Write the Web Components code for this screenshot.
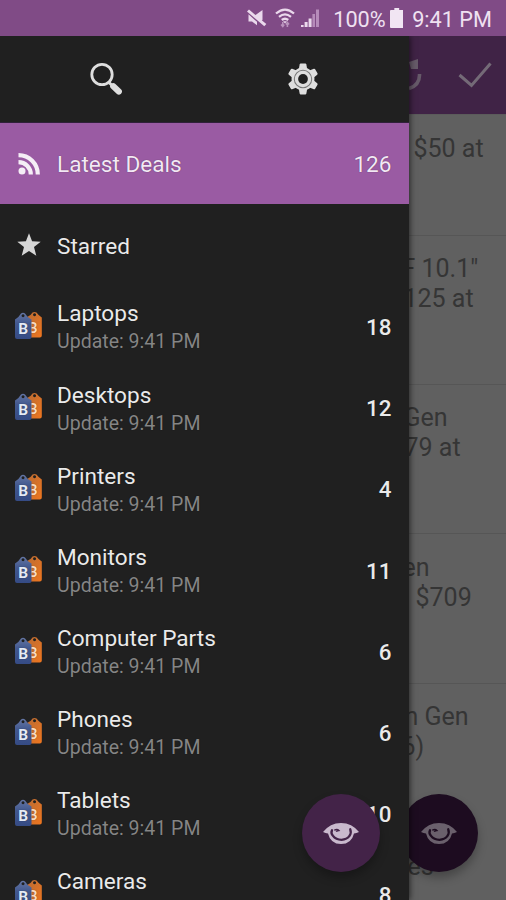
<!DOCTYPE html>
<html lang="en">
<head>
<meta charset="utf-8">
<title>Deals</title>
<style>
html,body{margin:0;height:100%;overflow:hidden;background:#202020;font-family:Roboto,"Liberation Sans",sans-serif}
</style>
</head>
<body>
<deals-app></deals-app>
<script>
const define = (name, html, setup) => customElements.define(name, class extends HTMLElement {
  constructor() {
    super();
    const t = document.createElement('template');
    t.innerHTML = html;
    this.attachShadow({ mode: 'open' }).append(t.content.cloneNode(true));
  }
  connectedCallback() { if (setup) setup(this, this.shadowRoot); }
});

const tooth = 'M11.6 6.5L12.4 1.6q.2-1 1.1-1h5q.9 0 1.1 1L20.4 6.5z';
const glyphs = {
  search: ['0 0 36 36', '<circle cx="14" cy="13.5" r="10.2" fill="none" stroke="#dedede" stroke-width="2.8"/><path d="M21 21.5l3.2 3" stroke="#dedede" stroke-width="3"/><path d="M25.3 25.3l5.5 5.2" stroke="#dedede" stroke-width="6.2" stroke-linecap="round"/>'],
  gear: ['0 0 32 34', `<g fill="#dedede"><circle cx="16" cy="17" r="12.2"/>${[0,60,120,180,240,300].map(a => `<path transform="rotate(${a} 16 17)" d="${tooth}"/>`).join('')}</g><circle cx="16" cy="17" r="9.3" fill="none" stroke="#777" stroke-width="1.1"/><circle cx="16" cy="17" r="5.2" fill="#202020"/>`],
  rss: ['0 0 24 24', '<circle cx="5" cy="19" r="3.5" fill="#f5eef6"/><path d="M1.5 10.2A12.3 12.3 0 0 1 13.8 22.5M1.5 3.2A19.3 19.3 0 0 1 20.8 22.5" fill="none" stroke="#f5eef6" stroke-width="4.2"/>'],
  star: ['0 0 24 24', '<path fill="#d6d6d6" d="M12 .2l3.1 8 8.6.5-6.7 5.4 2.3 8.6-7.3-4.8-7.3 4.8L7 14.1.3 8.7l8.6-.5z"/>'],
  check: ['0 0 36 28', '<path d="M2.5 14L14.5 24.5L33.5 2.5" fill="none" stroke="#746a77" stroke-width="3"/>'],
  refresh: ['0 0 14 36', '<path d="M0 5l9-3v10H2z" fill="#665a69"/><path d="M10.5 17Q11 28 0 31.5" fill="none" stroke="#665a69" stroke-width="3.6"/>'],
  eye: ['0 0 36 24', '<path fill="var(--ink)" d="M0 10.5Q7 1 18 1Q29 1 36 10.5Q33.5 12 31 12Q28.5 23 18 23Q7.500 23 5 12Q2.500 12 0 10.500z"/><path fill="none" stroke="var(--hole)" stroke-width="2.300" stroke-linecap="round" d="M9 8.500Q7.500 11.500 10 14.500Q13 18.600 18.500 18.600Q24 18.200 26.500 14.500Q28.600 11.500 27.200 7.500"/><path fill="none" stroke="var(--hole)" stroke-width="1.500" d="M11.200 8.600q3-1.800 4.600.2q-2 .1-2.500 1.300"/>'],
  mute: ['0 0 20 20', '<g fill="#ead9ec"><path d="M7.500 7L15.500 1v10.300L14 13zM1.500 5.500L10 13.500V17l-5-3.800H1.500z"/></g><path d="M1 1.600L18.300 17" stroke="#ead9ec" stroke-width="3"/>'],
  wifi: ['0 0 20 22', '<g fill="none" stroke="#ead9ec"><path d="M1 6.5Q10-1.3 19 6.5" stroke-width="2.3"/><path d="M4 9.8Q10 4.8 16 9.8" stroke-width="2.2"/><path d="M6.8 13Q10 10.3 13.2 13" stroke-width="2.4"/></g><path d="M8 14.2h4L10 16.4z" fill="#ead9ec"/><path d="M7.8 15v4.5m-1.7-2l1.7 2 1.4-2M12.4 20v-4.5m-1.6 2l1.6-2 1.6 2" fill="none" stroke="#b993bd" stroke-width="1.6"/>'],
  signal: ['0 0 20 20', '<g fill="#ead9ec"><path d="M1 17h2.6v2H1zM4.6 14h3v5h-3zM8.6 10.5h3V19h-3z"/></g><path fill="#b68bba" d="M12.4 6H15v13h-2.6zM16 1.5h3V19h-3z"/>'],
  battery: ['0 0 14 20', '<path fill="#f1e5f3" d="M4.5 0h5v2H13q1 0 1 1v16q0 1-1 1H1q-1 0-1-1V3q0-1 1-1h3.5z"/>'],
  tags: ['0 0 29 29', '<defs><linearGradient id="o" x2="1" y2="1"><stop stop-color="#b96c34"/><stop offset="1" stop-color="#ef761f"/></linearGradient><linearGradient id="b" x2="0" y2="1"><stop stop-color="#6577a6"/><stop offset=".4" stop-color="#43598f"/><stop offset="1" stop-color="#354b85"/></linearGradient></defs><path fill="url(#o)" fill-rule="evenodd" d="M13 6Q17.500 4 18.500 1.600Q20.500 .2 22.500 1.600Q24 4 27.800 6.500V24.500q0 2-2 2H14zM20.500 2.200a1.500 1.500 0 1 0 .1 0"/><text x="14.500" y="21.500" font-family="Roboto,sans-serif" font-weight="700" font-size="14" fill="#fbd9be">B</text><path fill="url(#b)" fill-rule="evenodd" d="M1 8.500Q5 6 7 2.400Q9 1 11 2.400Q13 6 17.500 8.500V26q0 2-2 2H3Q1 28 1 26zM9 3.200a1.500 1.500 0 1 0 .1 0"/><text x="4.300" y="22.800" font-family="Roboto,sans-serif" font-weight="700" font-size="15.500" fill="#e4eaf6">B</text>']
};

define('app-icon', `<style>:host{display:block;flex:none}svg{display:block;width:100%;height:100%}</style><svg></svg>`, (el, root) => {
  const [box, body] = glyphs[el.getAttribute('name')];
  const svg = root.querySelector('svg');
  svg.setAttribute('viewBox', box);
  svg.setAttribute('preserveAspectRatio', 'none');
  svg.innerHTML = body;
});

define('status-bar', `<style>
:host{display:flex;align-items:center;justify-content:flex-end;box-sizing:border-box;height:36px;padding:2px 14px 0 0;background:#804b86;color:#efe1f1;font-size:21.7px;white-space:nowrap}
.m{width:20px;height:19px;margin:-2px 8px 0 0}.w{width:20px;height:22px;margin:-2px 5px 0 0}.s{width:20px;height:20px;margin:-2px 13px 0 0}.b{width:13.5px;height:20px;margin:-3px 9px 0 4px}
</style><app-icon class="m" name="mute"></app-icon><app-icon class="w" name="wifi"></app-icon><app-icon class="s" name="signal"></app-icon><span>100%</span><app-icon class="b" name="battery"></app-icon><span>9:41 PM</span>`);

define('feed-row', `<style>
:host{display:flex;align-items:center;box-sizing:border-box;height:81.15px;flex:none;padding:4px 17px 0 14px;color:#eaeaea;font-size:22.6px;text-shadow:0 0 1px #0008}
:host([selected]){background:#9a5ba3;color:#f3e8f5;height:81.5px}
.icon{width:29px;height:29px;margin:-4px 14px 0 0}
.icon.small{width:24px;height:24px;margin:-3px 16px 0 3px}
.copy{flex:1;display:flex;flex-direction:column;line-height:28px;white-space:nowrap}
.copy.two{padding-top:1.500px}
.sub{color:#858585;font-size:19.55px}
.count{font-weight:500;font-size:22.4px;margin-top:-1px}
:host([selected]) .count{font-weight:400;font-size:22.6px}
</style><div class="glyph"></div><div class="copy"><slot></slot></div><span class="count"></span>`, (el, root) => {
  const name = el.getAttribute('icon') || 'tags';
  const icon = document.createElement('app-icon');
  icon.setAttribute('name', name);
  icon.className = name === 'tags' ? 'icon' : 'icon small';
  root.querySelector('.glyph').replaceWith(icon);
  root.querySelector('.count').textContent = el.getAttribute('count') || '';
  if (name === 'tags') {
    const sub = document.createElement('span');
    sub.className = 'sub';
    sub.textContent = 'Update: 9:41 PM';
    const copy = root.querySelector('.copy');
    copy.classList.add('two');
    copy.append(sub);
  }
});

define('nav-drawer', `<style>
:host{display:flex;flex-direction:column;background:#202020;overflow:hidden}
header{display:flex;height:86.5px;flex:none;box-sizing:border-box;padding-top:1px;align-items:center;border-bottom:1px solid #30213a}
header div{flex:1;display:grid;place-items:center}
.s{width:36px;height:36px;margin-left:8px}.g{width:30px;height:32px;margin-right:7px}
</style><header><div><app-icon class="s" name="search"></app-icon></div><div><app-icon class="g" name="gear"></app-icon></div></header><slot></slot>`);

define('deal-item', `<style>
:host{display:block;box-sizing:border-box;flex:none;height:149.4px;padding-top:18.6px;border-top:1px solid #565656;line-height:30px;font-size:25px;color:#353535;white-space:nowrap}
</style><slot></slot>`);

define('deal-list', `<style>
:host{display:flex;flex-direction:column;background:#606060;overflow:hidden}
header{display:flex;align-items:center;height:78px;flex:none;box-sizing:border-box;background:#402346}
.r{width:14px;height:36px;margin-right:34px}.c{width:36px;height:28px}
.first{height:120.5px;border-top-color:#5b5b5b}
.last{border:0;padding-top:20px}
span{display:block;margin-left:var(--x)}
</style><header><app-icon class="r" name="refresh"></app-icon><app-icon class="c" name="check"></app-icon></header>
<deal-item class="first"><span style="--x:5px">$50 at</span></deal-item>
<deal-item><span style="--x:-7px">F 10.1"</span><span style="--x:-5px">125 at</span></deal-item>
<deal-item><span style="--x:-5px">Gen</span><span style="--x:-4px">79 at</span></deal-item>
<deal-item><span style="--x:-6px">en</span><span style="--x:7px">$709</span></deal-item>
<deal-item><span style="--x:-4px">n Gen</span><span style="--x:-7px">6)</span></deal-item>
<deal-item class="last"><span style="--x:-1px">es</span></deal-item>`);

define('eye-button', `<style>
:host{display:grid;place-items:center;width:78px;height:78px;border-radius:50%;background:var(--hole);box-shadow:0 6px 10px #0004}
app-icon{width:36px;height:23px;margin-top:1px}
</style><app-icon name="eye"></app-icon>`);

const rows = [['Laptops',18],['Desktops',12],['Printers',4],['Monitors',11],['Computer Parts',6],['Phones',6],['Tablets',10],['Cameras',8]];
define('deals-app', `<style>
:host{display:grid;grid-template:36px 864px / 408.5px 97.5px;width:506px;height:900px;overflow:hidden;position:relative}
status-bar{grid-column:1/3}
nav-drawer{z-index:2;box-shadow:1px 0 6px #0009;clip-path:inset(0 -10px 0 0)}
eye-button{position:absolute;left:302px;top:794px;z-index:3;--ink:#c9b9cd;--hole:#432348}
eye-button.under{left:400px;z-index:1;--ink:#6a606c;--hole:#1d0c20}
</style><status-bar></status-bar>
<nav-drawer><feed-row selected icon="rss" count="126">Latest Deals</feed-row><feed-row icon="star">Starred</feed-row>${rows.map(([n,c]) => `<feed-row count="${c}">${n}</feed-row>`).join('')}</nav-drawer>
<deal-list></deal-list><eye-button class="under"></eye-button><eye-button></eye-button>`);
</script>
</body>
</html>
